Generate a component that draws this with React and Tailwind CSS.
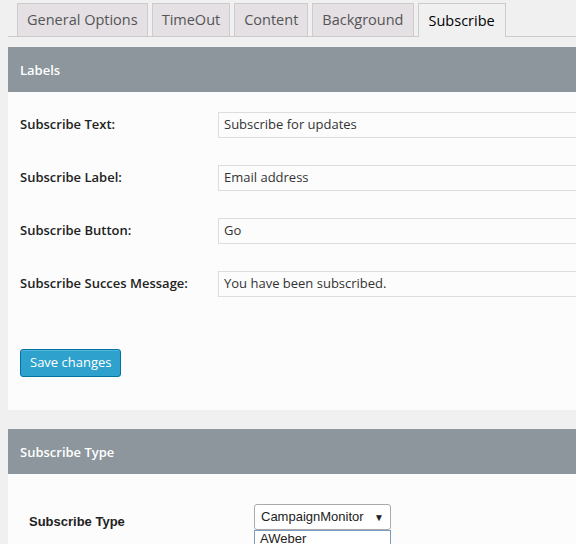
const tabs = ['General Options', 'TimeOut', 'Content', 'Background', 'Subscribe'];

const rows = [
  { label: 'Subscribe Text:', value: 'Subscribe for updates' },
  { label: 'Subscribe Label:', value: 'Email address' },
  { label: 'Subscribe Button:', value: 'Go' },
  { label: 'Subscribe Succes Message:', value: 'You have been subscribed.' },
];

export default function App() {
  return (
    <div className="min-h-[544px] w-[576px] overflow-hidden bg-[#f1f0f1] font-['Open_Sans',sans-serif] text-[#444]">
      {/* tabs */}
      <div className="ml-[8px] flex h-[37px] items-end gap-[4px] border-b border-[#ccc] pl-[9px] pt-[3px]">
        {tabs.map((t) =>
          t === 'Subscribe' ? (
            <div
              key={t}
              className="-mb-px flex h-[34px] items-center border border-b-0 border-[#ccc] bg-[#f1f0f1] px-[10px] text-[14.5px] text-black"
            >
              {t}
            </div>
          ) : (
            <div
              key={t}
              className="flex h-[33px] items-center border border-b-0 border-[#ccc] bg-[#e4e0e4] px-[9px] text-[14.5px] text-[#555]"
            >
              {t}
            </div>
          )
        )}
      </div>

      {/* labels panel */}
      <div className="ml-[8px] mt-[10px] w-[620px] bg-[#fcfcfc]">
        <div className="flex h-[45px] items-center bg-[#8c969c] px-[12px] pt-[3px] text-[13px] font-semibold text-white">Labels</div>
        <div className="px-[12px] pt-[20px]">
          {rows.map((r) => (
            <div key={r.label} className="mb-[27px] flex items-center">
              <div className="w-[198px] text-[13px] font-semibold text-[#222]">{r.label}</div>
              <div className="flex h-[26px] flex-1 items-center border border-[#ddd] bg-[#fcfcfc] px-[5px] text-[13px] text-[#333]">
                {r.value}
              </div>
            </div>
          ))}
          <div className="pt-[25px] pb-[33px]">
            <button className="h-[28px] rounded-[3px] border border-[#0074a2] bg-[#2ea2cc] px-[9px] text-[13px] text-white shadow-[inset_0_1px_0_rgba(120,200,230,0.5)]">
              Save changes
            </button>
          </div>
        </div>
      </div>

      {/* subscribe type panel */}
      <div className="ml-[8px] mt-[19px] w-[620px] bg-[#fcfcfc]">
        <div className="flex h-[45px] items-center bg-[#8c969c] px-[12px] pt-[2px] text-[13px] font-semibold text-white">Subscribe Type</div>
        <div className="flex pl-[21px] pt-[30px] font-['Liberation_Sans',Arial,sans-serif]">
          <div className="w-[225px] pt-[8px] text-[13px] font-bold text-[#222]">Subscribe Type</div>
          <div className="w-[137px]">
            <div className="flex h-[26px] items-center justify-between rounded-[3px] border border-[#aaa] bg-white pl-[6px] pr-[6px] text-[13px] text-[#222]">
              <span>CampaignMonitor</span>
              <span className="text-[10px]">▼</span>
            </div>
            <div className="h-[20px] border border-[#7a9cc0] bg-white px-[5px] text-[13px] leading-[16px] text-[#222]">AWeber</div>
          </div>
        </div>
      </div>
    </div>
  );
}
